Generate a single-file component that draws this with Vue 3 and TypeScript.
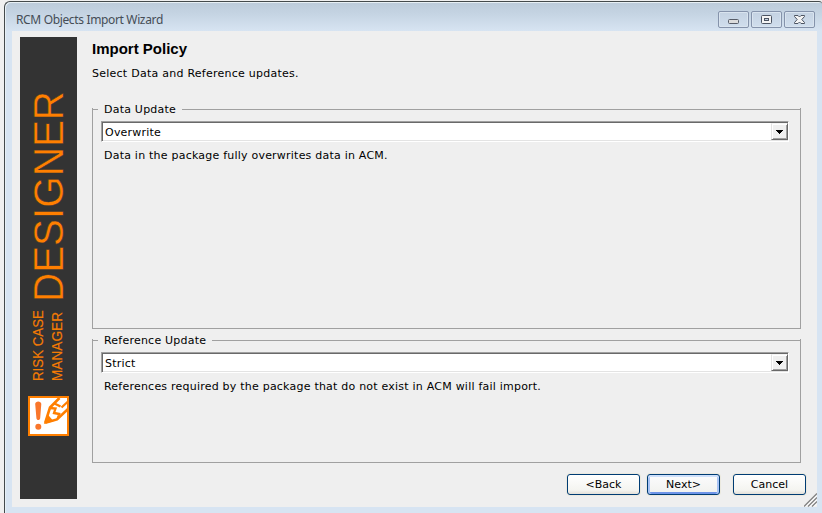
<script setup lang="ts">
import { ref } from 'vue'

interface Policy {
  id: string
  legend: string
  value: string
  note: string
}

const policies = ref<Policy[]>([
  { id: 'data', legend: 'Data Update', value: 'Overwrite', note: 'Data in the package fully overwrites data in ACM.' },
  { id: 'reference', legend: 'Reference Update', value: 'Strict', note: 'References required by the package that do not exist in ACM will fail import.' },
])
</script>

<template>
  <div class="desktop">
    <div class="window">
      <header class="titlebar">
        <span class="caption">RCM Objects Import Wizard</span>
        <div class="controls">
          <button class="control" aria-label="Minimize">
            <svg width="29" height="15" viewBox="0 0 29 15"><rect x="9.5" y="7.5" width="10" height="4" rx="1" fill="#dcdcdc" stroke="#565c68" /></svg>
          </button>
          <button class="control" aria-label="Maximize">
            <svg width="29" height="15" viewBox="0 0 29 15"><rect x="9.5" y="3.5" width="10" height="8" rx="1" fill="#f4f4f4" stroke="#4c5462" /><rect x="12.5" y="6.5" width="4" height="2" fill="#c4d2e2" stroke="#4c5462" /></svg>
          </button>
          <button class="control" aria-label="Close">
            <svg width="29" height="15" viewBox="0 0 29 15"><path d="M9.5 3.5H13L14.5 5L16 3.5H19.5V4.5L16.8 7.5L19.5 10.5V11.5H16L14.5 10L13 11.5H9.5V10.5L12.2 7.5L9.5 4.5Z" fill="#f4f4f4" stroke="#4c5462" /></svg>
          </button>
        </div>
      </header>

      <main class="client">
        <aside class="banner">
          <svg width="57" height="462" viewBox="0 0 57 462">
            <g class="brand">
              <text transform="translate(43 265) rotate(-90)" font-size="42.5" textLength="211" lengthAdjust="spacingAndGlyphs" class="thin">DESIGNER</text>
              <text transform="translate(23 344) rotate(-90)" font-size="15" textLength="71" lengthAdjust="spacingAndGlyphs" class="small">RISK CASE</text>
              <text transform="translate(42 344) rotate(-90)" font-size="15" textLength="69" lengthAdjust="spacingAndGlyphs" class="small">MANAGER</text>
            </g>
            <g transform="translate(8 359)">
              <rect x="1" y="1" width="39" height="38" fill="#fff" stroke="#ff7f00" stroke-width="2" />
              <path d="M7.2 8C7.2 4.5 13.3 4.5 13.3 8L12.2 22C12 24.7 8.6 24.7 8.4 22Z" fill="#f9762b" />
              <circle cx="10.3" cy="30.7" r="3" fill="#f9762b" />
              <path d="M17.2 26.8L22 11.5L31.5 2M17.2 26.8L29 23.4L40 13" fill="none" stroke="#ff7f00" stroke-width="2.6" />
              <path d="M16 28L19.4 18L25.5 25.2Z" fill="#ff7f00" />
              <path d="M22 12L27.5 12.5L26 17L31.2 18L29.5 23" fill="none" stroke="#ff7f00" stroke-width="2.3" />
              <path d="M26.5 7.5L32.5 10.5M33.5 11.5L40 5.5" fill="none" stroke="#ff7f00" stroke-width="2.3" />
            </g>
          </svg>
        </aside>

        <section class="content">
          <h1>Import Policy</h1>
          <p class="intro">Select Data and Reference updates.</p>

          <section v-for="policy in policies" :key="policy.id" class="group" :class="policy.id">
            <div class="legend"><i></i><span>{{ policy.legend }}</span><b></b></div>
            <div class="combo">
              <span class="value">{{ policy.value }}</span>
              <button class="drop" aria-label="Open list">
                <svg width="7" height="4" viewBox="0 0 7 4" shape-rendering="crispEdges"><path d="M0 0H7V1H6V2H5V3H4V4H3V3H2V2H1V1H0Z" /></svg>
              </button>
            </div>
            <p class="note">{{ policy.note }}</p>
          </section>

          <footer class="actions">
            <button class="btn">&lt;Back</button>
            <button class="btn primary">Next&gt;</button>
            <button class="btn cancel">Cancel</button>
          </footer>
        </section>

        <svg class="grip" width="13" height="14" viewBox="0 0 13 14">
          <path d="M0 13.5L13 .5M4 13.5L13 4.5M8 13.5L13 8.5" stroke="#858585" stroke-width="1.4" fill="none" />
          <path d="M2 13.5L13 2.5M6 13.5L13 6.5M10 13.5L13 10.5" stroke="#fff" stroke-width="1" fill="none" />
        </svg>
      </main>
    </div>
  </div>
</template>

<style>
body { margin: 0; overflow: hidden; }
</style>

<style scoped>
* { box-sizing: border-box; }
button { padding: 0; font: inherit; color: inherit; }
.desktop {
  width: 822px;
  height: 513px;
  padding: 1px 0 0 4px;
  background: #f0f0f0;
  overflow: hidden;
  font: 11px/14px "DejaVu Sans", Verdana, sans-serif;
  letter-spacing: .22px;
  color: #000;
}
.window {
  width: 818px;
  height: 520px;
  padding: 0 4px 0 7px;
  border: 1px solid #444a4c;
  border-right: 0;
  border-radius: 6px 3px 0 0;
  background: linear-gradient(#bccbda 0, #c5d4e3 12px, #d7e4f2 29px);
  box-shadow: inset 1px 1px 0 #e8f0f5;
}
.titlebar { height: 29px; display: flex; justify-content: space-between; }
.caption {
  padding: 9px 0 0 4px;
  font: 12px/18px "Noto Sans", sans-serif;
  letter-spacing: -.35px;
  color: #454d56;
  white-space: nowrap;
}
.controls { display: flex; gap: 2px; padding: 9px 3px 0 0; }
.control {
  width: 31px;
  height: 17px;
  border: 1px solid #8593ab;
  border-radius: 2px;
  background: linear-gradient(#c4d2e2, #d0deed);
  box-shadow: inset 0 0 0 1px #d9e4ef;
}
.control svg { display: block; }
.client {
  position: relative;
  width: 805px;
  height: 476px;
  padding: 6px 8px 0;
  display: flex;
  background: #efefef;
}
.banner { flex: none; width: 57px; height: 462px; background: #333; }
.banner svg { display: block; }
.brand { fill: #ff7f00; font-family: "Liberation Sans", Arial, sans-serif; letter-spacing: 0; }
.thin { stroke: #333; stroke-width: .5px; }
.small { fill: #f57c03; stroke: #f57c03; stroke-width: .15px; }
.content { flex: none; width: 724px; padding-left: 15px; }
h1 { margin: 2px 0 0; height: 20px; font: bold 15px/20px "Liberation Sans", Arial, sans-serif; letter-spacing: 0; }
.intro { margin: 8px 0 0; height: 14px; letter-spacing: .25px; }
.group {
  width: 709px;
  border: 1px solid;
  border-top: 0;
  border-image: linear-gradient(transparent 7px, #a0a0a0 7px) 1;
}
.data { height: 227px; margin-top: 21px; }
.reference { height: 130px; margin-top: 4px; }
.legend { display: flex; height: 16px; margin: 0 -1px; }
.legend i, .legend b { border-top: 1px solid #a0a0a0; margin-top: 7px; }
.legend i { width: 6px; }
.legend b { flex: 1; }
.legend span { padding: 1px 0 0 6px; }
.data .legend span { width: 84px; }
.reference .legend span { width: 114px; }
.combo {
  display: flex;
  width: 688px;
  height: 21px;
  margin: 3px 0 0 8px;
  border: 1px solid;
  border-color: #a0a0a0 #fff #fff #a0a0a0;
  background: #fff;
  box-shadow: inset 1px 1px #696969, inset -1px -1px #e3e3e3;
}
.value { flex: 1; padding: 4px 0 0 3px; }
.drop {
  width: 17px;
  height: 17px;
  margin: 1px 0 0;
  display: grid;
  place-items: center;
  border: 1px solid;
  border-color: #f5f5f5 #696969 #696969 #e3e3e3;
  background: #f0f0f0;
  box-shadow: inset 1px 1px #fff, inset -1px -1px #a0a0a0;
}
.note { margin: 7px 0 0 11px; height: 14px; white-space: nowrap; }
.actions { display: flex; margin: 11px 0 0 475px; gap: 7px; }
.btn {
  flex: none;
  width: 73px;
  height: 21px;
  border: 1px solid #003c74;
  border-radius: 3px;
  background: linear-gradient(#fff, #f4f4f0 80%, #e3e0d9);
  box-shadow: 0 0 0 1px #ebe9df;
  line-height: 19px;
}
.primary {
  background: linear-gradient(#fbfcfd, #f1f1ee);
  box-shadow: 0 0 0 1px #ebe9df, inset 0 2px #cee0fb, inset 2px 0 #a9c4f5, inset -2px 0 #a9c4f5, inset 0 -2px #6e94e8;
}
.cancel { margin-left: 6px; }
.grip { position: absolute; right: 0; bottom: 0; }
</style>
